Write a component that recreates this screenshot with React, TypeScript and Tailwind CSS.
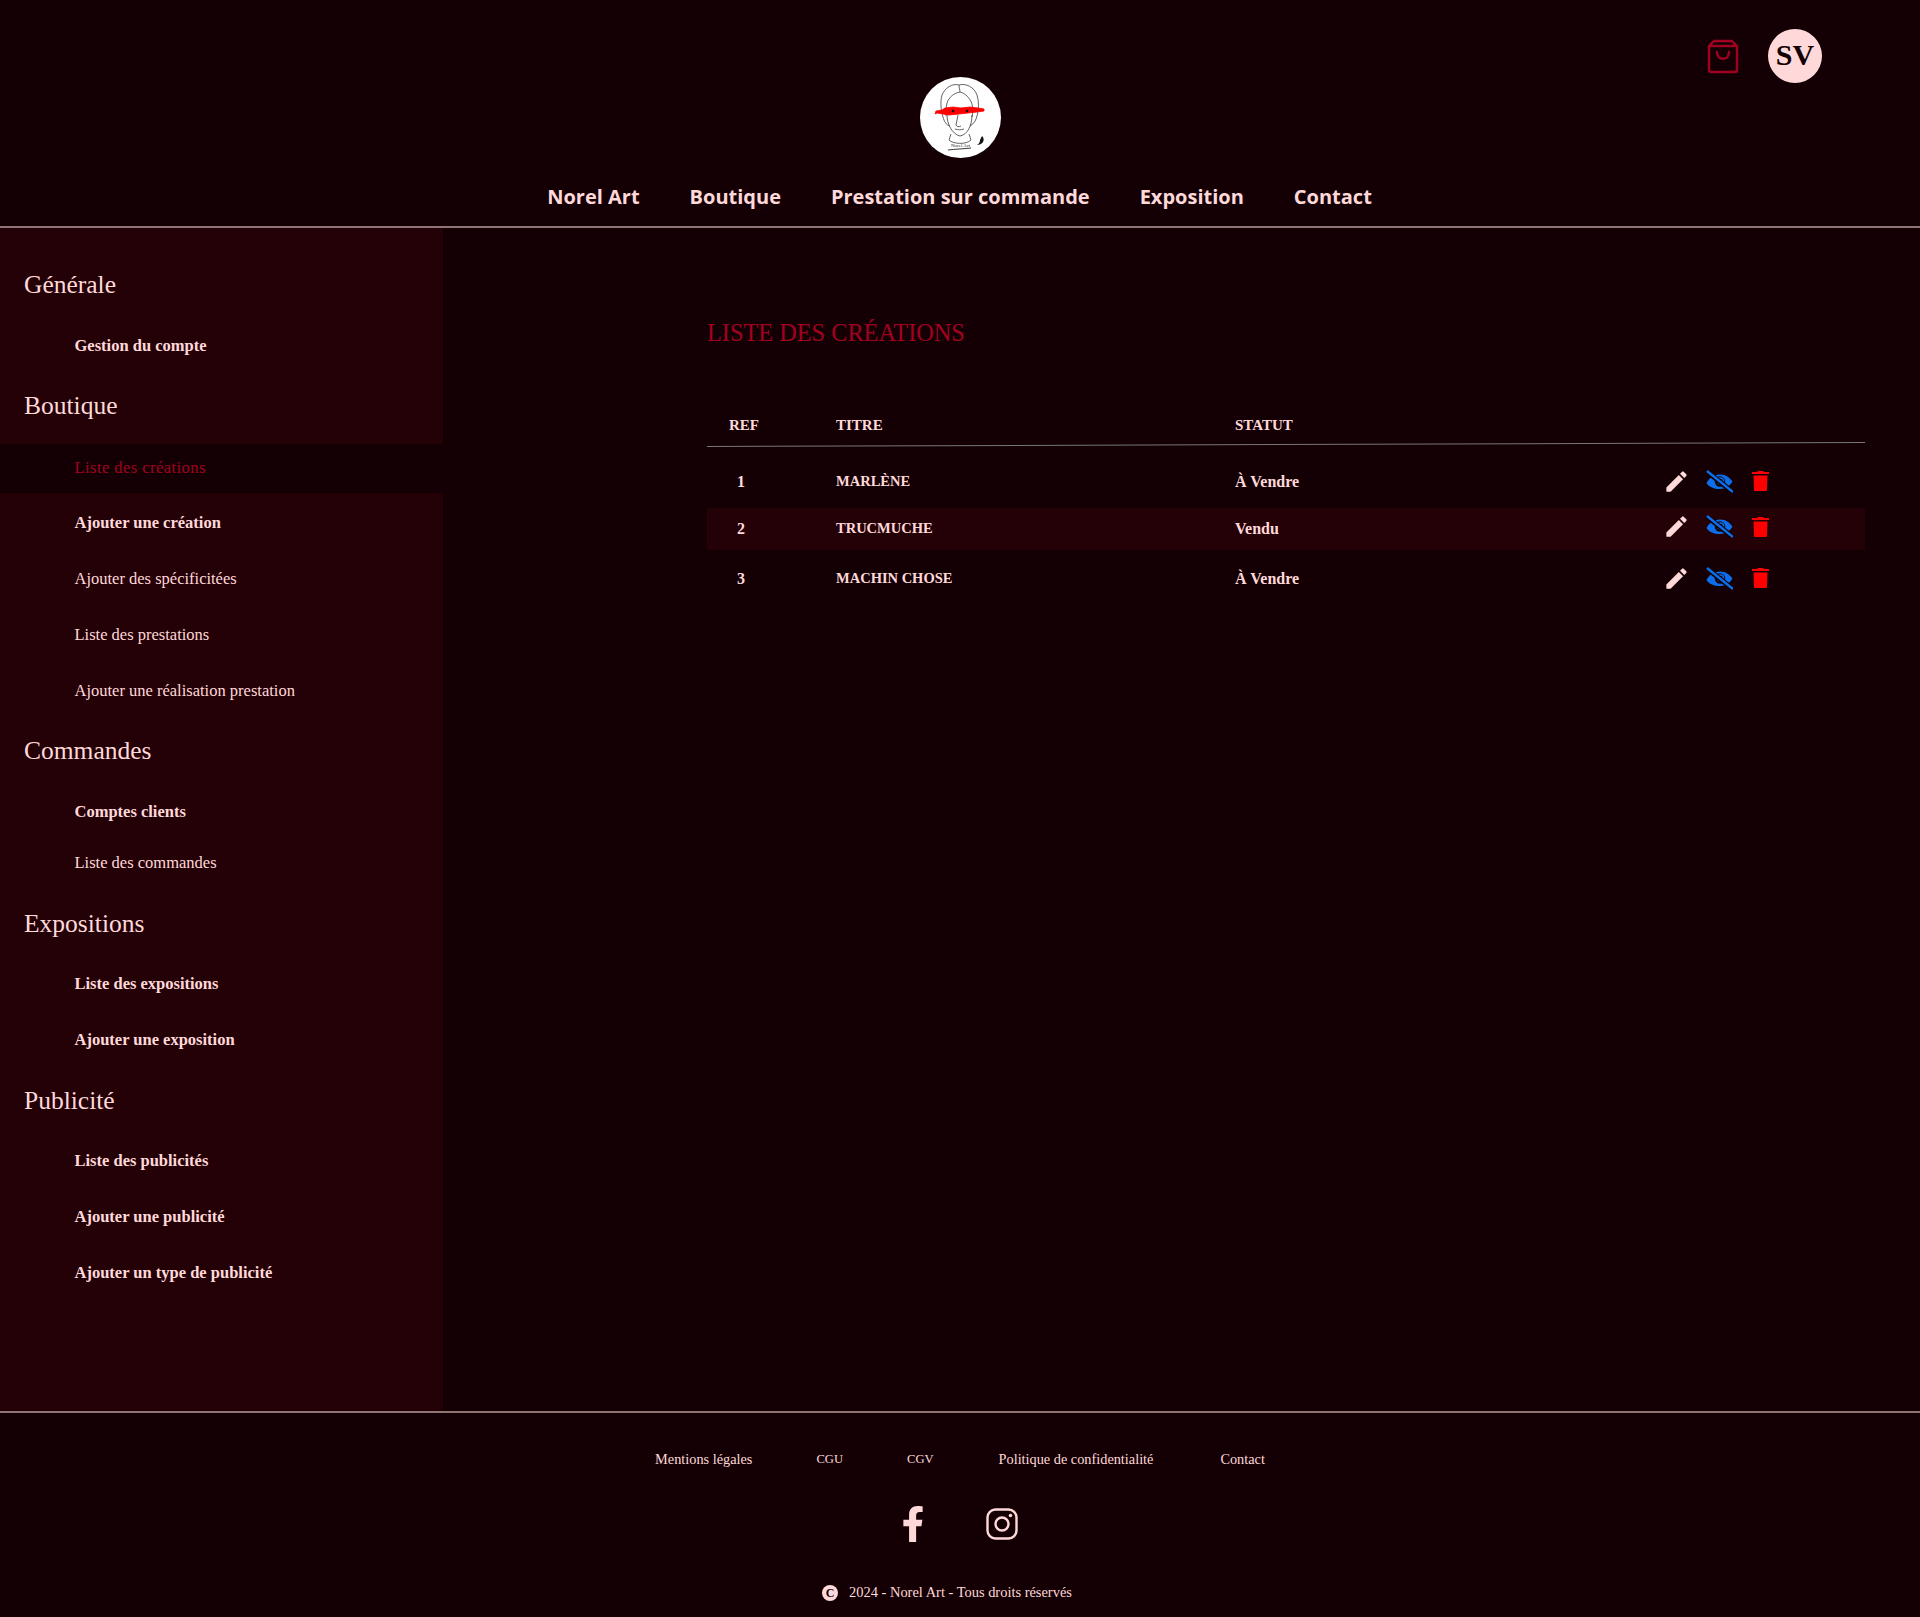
import React from 'react';
import { MdEdit } from 'react-icons/md';
import { FaFacebookF } from 'react-icons/fa';

const serif = "font-['Liberation_Serif',serif]";

type SideLink = { label: string; bold?: boolean; active?: boolean; short?: boolean };

const sections: { title: string; links: SideLink[] }[] = [
  { title: 'Générale', links: [{ label: 'Gestion du compte', bold: true }] },
  {
    title: 'Boutique',
    links: [
      { label: 'Liste des créations', active: true },
      { label: 'Ajouter une création', bold: true },
      { label: 'Ajouter des spécificitées' },
      { label: 'Liste des prestations' },
      { label: 'Ajouter une réalisation prestation' },
    ],
  },
  {
    title: 'Commandes',
    links: [{ label: 'Comptes clients', bold: true }, { label: 'Liste des commandes', short: true }],
  },
  {
    title: 'Expositions',
    links: [
      { label: 'Liste des expositions', bold: true },
      { label: 'Ajouter une exposition', bold: true },
    ],
  },
  {
    title: 'Publicité',
    links: [
      { label: 'Liste des publicités', bold: true },
      { label: 'Ajouter une publicité', bold: true },
      { label: 'Ajouter un type de publicité', bold: true },
    ],
  },
];

const rows = [
  { ref: '1', title: 'MARLÈNE', status: 'À Vendre', h: 'h-[52px]', icons: 'pb-[2px]' },
  { ref: '2', title: 'TRUCMUCHE', status: 'Vendu', h: 'h-[42px] bg-[#240007]', icons: 'pb-[5px]' },
  { ref: '3', title: 'MACHIN CHOSE', status: 'À Vendre', h: 'h-[58px]', icons: 'pb-[2px]' },
];

const Logo = () => (
  <div className="w-[81px] h-[81px] rounded-full bg-white overflow-hidden">
    <svg viewBox="0 0 81 81" className="w-full h-full" fill="none" stroke="#222" strokeWidth="0.7">
      <path d="M39 8c-7-2-14 3-17 10-2 7-1 15 1 22 1 4 3 8 7 9M39 8c7-2 15 2 18 10 2 6 2 15 0 21-1 4-3 8-7 10" />
      <path d="M39 8c0 3 1 5 1 7-6 1-11 5-13 11-1 4-1 9-1 13M40 15c5 1 10 6 12 12 1 4 1 9 0 13" />
      <path d="M27 38c0 9 5 19 13 21 7-1 12-10 12-21M38 38l-2 10c1 2 3 2 5 1M35 52c3 1 6 1 9 0M31 57c-1 2-1 4-2 6 4 4 17 5 22 0-1-2-1-4-2-6" />
      <path d="M28 73c7-1 15-1 23-2" strokeWidth="0.9" />
      <path d="M16 34l6-1 3-2 8-1 8 1 9-1 8 1 6 1v2l-7 1-9 1-9 1-10 1-6-1-6-1-2 1z" fill="#f00" stroke="#f00" strokeWidth="0.8" />
      <circle cx="33" cy="34" r="1.300" fill="#111" stroke="none" />
      <circle cx="47" cy="34" r="1.300" fill="#111" stroke="none" />
      <path d="M62 59c2 2 2 4 1 6-1 2-4 3-6 3 2-1 3-3 3-5z" fill="#111" stroke="none" />
      <text x="31" y="70" fontSize="5" fill="#222" stroke="none" fontFamily="Liberation Serif, serif">Norel Art</text>
    </svg>
  </div>
);

const EyeOff = () => (
  <svg viewBox="0 0 27 23" className="w-[27px] h-[23px]">
    <path d="M0.500 13C3 8 8 4.500 14 4.500S24 8 26.500 11.500C24 16 20 19 14 19S3 17 0.500 13z" fill="#0b6fec" />
    <circle cx="14" cy="11.500" r="5.200" fill="#140004" />
    <circle cx="14.500" cy="11" r="3" fill="none" stroke="#0b6fec" strokeWidth="1.600" />
    <path d="M1 1.500L26 21.500" stroke="#140004" strokeWidth="5" />
    <path d="M1 1L27 22" stroke="#0b6fec" strokeWidth="2.400" />
  </svg>
);

const Trash = () => (
  <svg viewBox="0 0 17 20" className="w-[17px] h-[20px]" fill="#f00">
    <path d="M6 0h5l1 1h5v2H0V1h5z" />
    <path d="M1.500 4.500h14l-.5 14c0 1-.5 1.500-1.500 1.500h-10c-1 0-1.500-.5-1.500-1.500z" />
  </svg>
);

const Instagram = () => (
  <svg viewBox="0 0 32 32" className="w-[32px] h-[32px]" fill="none" stroke="#ffd9d9" strokeWidth="2.400">
    <rect x="1.500" y="1.500" width="29" height="29" rx="8" />
    <circle cx="16" cy="16" r="6.500" />
    <circle cx="24.500" cy="7.500" r="1.800" fill="#ffd9d9" stroke="none" />
  </svg>
);

const App: React.FC = () => {
  return (
    <div className={`min-h-[1617px] bg-[#140004] text-[#ffd9d9] flex flex-col ${serif}`}>
      <header className="relative h-[228px] border-b-2 border-[#8f7375] flex flex-col items-center pt-[77px]">
        <Logo />
        <nav className="mt-[24px] mr-[1px] flex gap-[50px] font-['Open_Sans',sans-serif] font-bold text-[20px] leading-[30px]">
          <span>Norel Art</span>
          <span>Boutique</span>
          <span>Prestation sur commande</span>
          <span>Exposition</span>
          <span>Contact</span>
        </nav>
        <div className="absolute top-[29px] left-[1706px] flex items-center gap-[28px]">
          <svg viewBox="0 0 34 36" className="w-[34px] h-[36px]" fill="none" stroke="#a30021" strokeWidth="2.400" strokeLinejoin="round">
            <path d="M8 3h18l5 5v24c0 1-1 2-2 2H5c-1 0-2-1-2-2V8z" />
            <path d="M3 8h28" />
            <path d="M11 14c0 9 12 9 12 0" strokeLinecap="round" />
          </svg>
          <div className="w-[54px] h-[54px] rounded-full bg-[#ffd9d9] text-[#140004] flex items-center justify-center pb-[2px] text-[30px] font-bold leading-none">
            SV
          </div>
        </div>
      </header>

      <div className="flex h-[1183px]">
        <aside className="w-[443px] shrink-0 bg-[#240007] pt-[25px]">
          {sections.map((s) => (
            <div key={s.title}>
              <h2 className="pl-[24px] h-[65px] flex items-center text-[25.500px] font-normal">{s.title}</h2>
              <ul>
                {s.links.map((l) => (
                  <li
                    key={l.label}
                    className={`pl-[74.500px] flex items-center text-[16.500px] ${l.bold ? 'font-bold' : ''} ${
                      l.active
                        ? 'bg-[#140004] text-[#a30021] h-[49px] mt-[5px] mb-[2px] tracking-[0.45px]'
                        : l.short
                          ? 'h-[46px] mb-[5.500px]'
                          : 'h-[56px]'
                    }`}
                  >
                    {l.label}
                  </li>
                ))}
              </ul>
            </div>
          ))}
        </aside>

        <main className="flex-1 pl-[264px] pr-[55px] pt-[87px]">
          <h1 className="text-[24.300px] leading-[36px] font-normal text-[#a30021]">LISTE DES CRÉATIONS</h1>
          <div className="mt-[56.500px] pl-[22px] h-[36px] flex items-center font-bold text-[15px]">
            <span className="w-[107px]">REF</span>
            <span className="w-[399px]">TITRE</span>
            <span>STATUT</span>
          </div>
          <div className="h-px bg-[#777] -rotate-[0.2deg]" />
          <div className="mt-[11.500px]">
            {rows.map((r) => (
              <div key={r.ref} className={`flex items-center pl-[22px] font-bold text-[16px] ${r.h}`}>
                <span className="w-[107px] pl-[8px]">{r.ref}</span>
                <span className="w-[399px] text-[14.500px]">{r.title}</span>
                <span className="w-[428px]">{r.status}</span>
                <span className={`flex items-center ${r.icons}`}>
                  <MdEdit className="w-[27px] h-[27px] text-[#ffd9d9]" />
                  <span className="ml-[16px]"><EyeOff /></span>
                  <span className="ml-[19px]"><Trash /></span>
                </span>
              </div>
            ))}
          </div>
        </main>
      </div>

      <footer className="flex-1 border-t-2 border-[#8f7375] flex flex-col items-center pt-[36px]">
        <div className="flex items-center text-[14.300px] leading-[20px]">
          <span className="mr-[64px]">Mentions légales</span>
          <span className="mr-[64px] text-[12.600px]">CGU</span>
          <span className="mr-[65px] text-[12.600px]">CGV</span>
          <span className="mr-[67px]">Politique de confidentialité</span>
          <span>Contact</span>
        </div>
        <div className="mt-[37px] mr-[8px] flex items-center gap-[55px]">
          <FaFacebookF className="w-[36px] h-[36px]" />
          <Instagram />
        </div>
        <div className="mt-[40px] mr-[26px] flex items-center gap-[11px] text-[14.450px]">
          <span className="w-[16px] h-[16px] rounded-full bg-[#ffd9d9] text-[#140004] flex items-center justify-center text-[12px] font-bold leading-none">C</span>
          <span>2024 - Norel Art - Tous droits réservés</span>
        </div>
      </footer>
    </div>
  );
};

export default App;
